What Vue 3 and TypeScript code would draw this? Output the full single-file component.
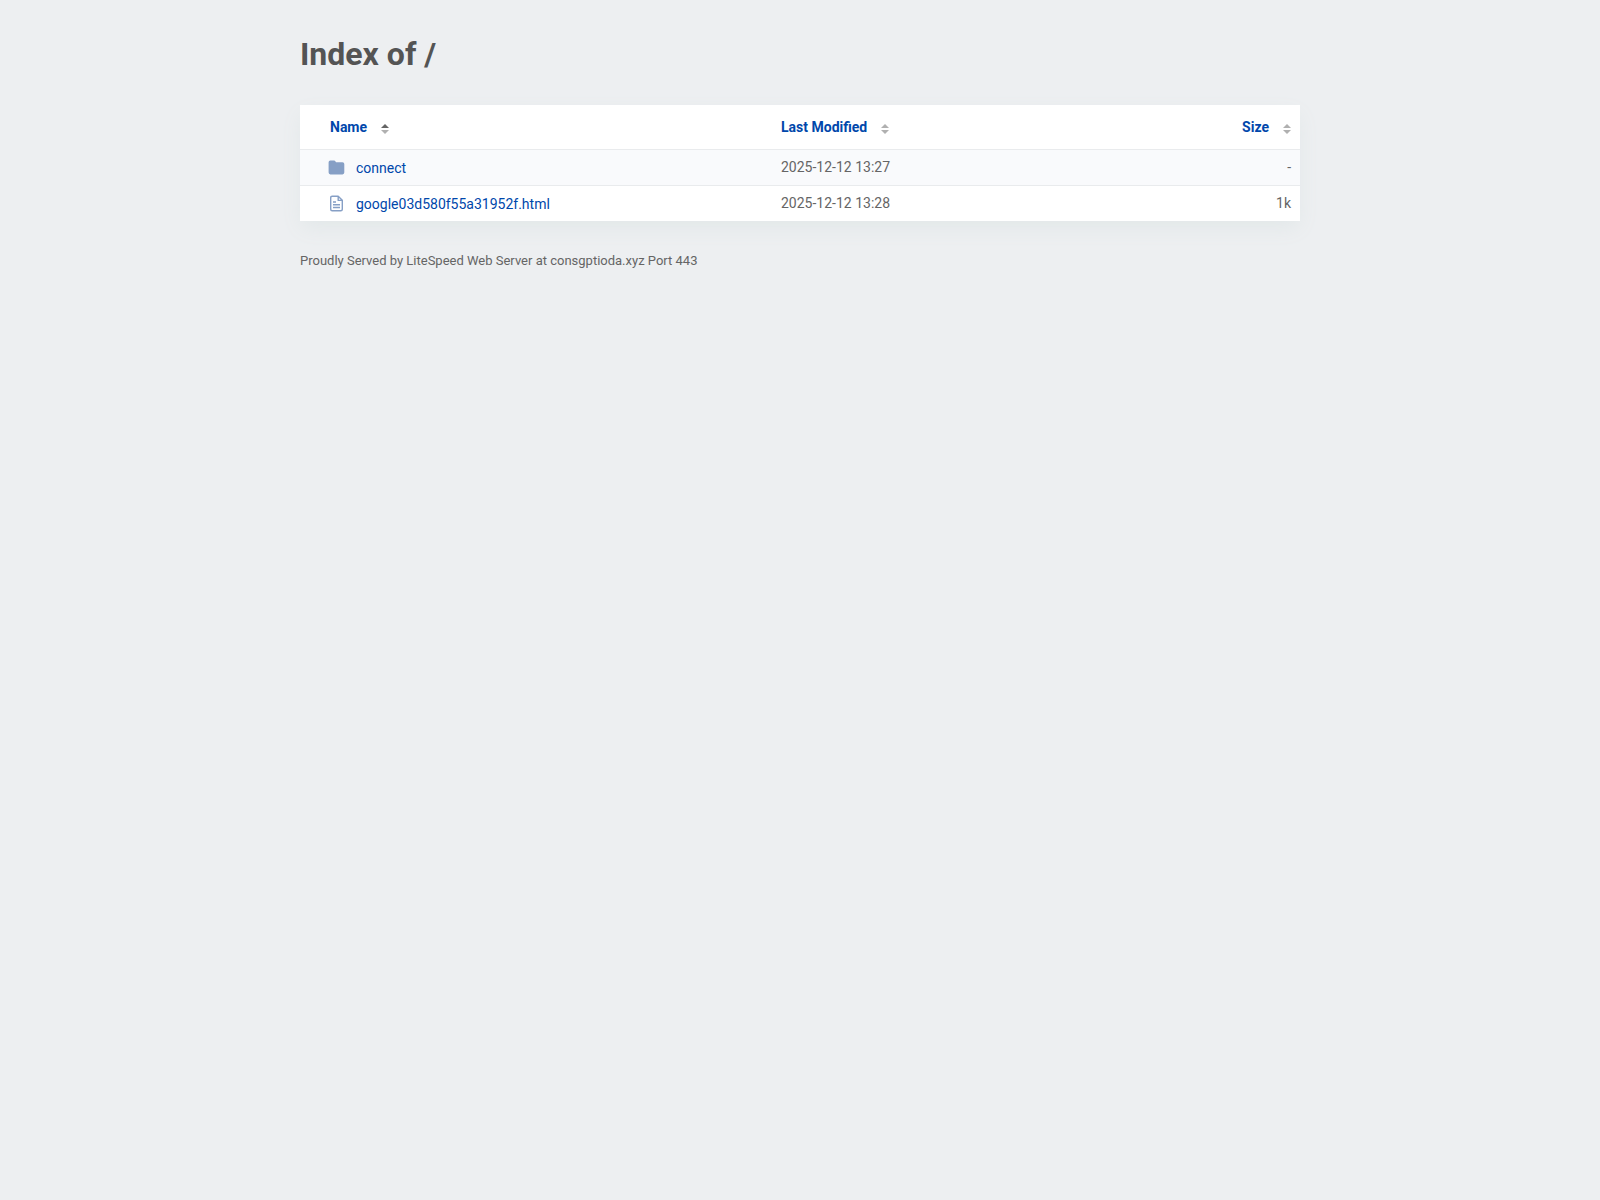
<script setup lang="ts">
interface Column {
  key: string
  label: string
  sorted: boolean
}

interface Entry {
  name: string
  kind: 'folder' | 'file'
  modified: string
  size: string
}

const columns: Column[] = [
  { key: 'name', label: 'Name', sorted: true },
  { key: 'modified', label: 'Last Modified', sorted: false },
  { key: 'size', label: 'Size', sorted: false },
]

const entries: Entry[] = [
  { name: 'connect', kind: 'folder', modified: '2025-12-12 13:27', size: '-' },
  { name: 'google03d580f55a31952f.html', kind: 'file', modified: '2025-12-12 13:28', size: '1k' },
]
</script>

<template>
  <main class="content">
    <h1>Index of /</h1>
    <table>
      <thead>
        <tr>
          <th v-for="c in columns" :key="c.key" :class="c.key" :aria-sort="c.sorted ? 'ascending' : 'none'">
            <button type="button" class="sort">
              {{ c.label }}
              <svg :class="{ sorted: c.sorted }" width="8" height="10" viewBox="0 0 8 10" aria-hidden="true">
                <path class="up" d="M4 0 L8 4 H0 Z" />
                <path d="M0 6 H8 L4 10 Z" />
              </svg>
            </button>
          </th>
        </tr>
      </thead>
      <tbody>
        <tr v-for="e in entries" :key="e.name">
          <td class="name">
            <a href="#">
              <svg v-if="e.kind === 'folder'" width="18" height="18" viewBox="0 0 18 18" aria-hidden="true">
                <path fill="#869fc5" d="M2.4 1.5 H6 Q7 1.5 7.5 2.5 L8 3.2 H14.5 Q16.3 3.2 16.3 5 V13.6 Q16.3 15.4 14.5 15.4 H2.4 Q0.6 15.4 0.6 13.6 V3.3 Q0.6 1.5 2.4 1.5 Z" />
              </svg>
              <svg v-else width="18" height="18" viewBox="0 0 18 18" fill="none" stroke="#869fc5" stroke-width="1.4" stroke-linejoin="round" aria-hidden="true">
                <path d="M4.2 1.2 H10.2 L14.3 5.3 V14.3 Q14.3 15.8 12.8 15.8 H4.2 Q2.7 15.8 2.7 14.3 V2.7 Q2.7 1.2 4.2 1.2 Z M10.2 1.4 V5.4 H14" />
                <path d="M5 7 H8 M5 9.7 H12 M5 12.5 H12" />
              </svg>
              <span>{{ e.name }}</span>
            </a>
          </td>
          <td class="modified">{{ e.modified }}</td>
          <td class="size">{{ e.size }}</td>
        </tr>
      </tbody>
    </table>
    <footer>Proudly Served by LiteSpeed Web Server at consgptioda.xyz Port 443</footer>
  </main>
</template>

<style>
body {
  background: #edeff1;
}
</style>

<style scoped>
.content {
  max-width: 1000px;
  margin: 0 auto;
  padding: 32px 0;
  color: #545454;
  font-family: Roboto, "Liberation Sans", sans-serif;
  font-size: 14px;
  line-height: 20px;
}
h1 {
  margin: 0 0 29px;
  font-size: 32px;
  line-height: 44px;
  font-weight: 700;
}
table {
  width: 100%;
  table-layout: fixed;
  border-collapse: separate;
  border-spacing: 0;
  background: #fff;
  box-shadow: 0 8px 20px -2px #e1e7e8;
}
th,
td {
  padding: 7px 9px 8px;
  text-align: left;
  color: #656565;
}
th {
  padding-top: 12px;
  padding-bottom: 12px;
  border-bottom: 1px solid #e9ebed;
}
tbody tr:nth-child(odd) td {
  background: #f9fafc;
}
tbody tr:not(:last-child) td {
  border-bottom: 1px solid #e9ebed;
}
th.name {
  width: 47.2%;
  box-sizing: border-box;
  padding-left: 30px;
}
td.name {
  padding: 8px 9px 7px 28px;
}
th.size,
td.size {
  text-align: right;
}
td.modified,
td.size {
  vertical-align: top;
}
.sort {
  display: inline-flex;
  align-items: center;
  gap: 14px;
  padding: 0;
  border: 0;
  background: none;
  color: #0047ab;
  font: inherit;
  font-weight: 700;
  line-height: 20px;
  cursor: pointer;
}
.sort svg {
  margin-top: 3px;
  fill: #b0b0b0;
}
.sort .sorted .up {
  fill: #656565;
}
a {
  display: flex;
  align-items: center;
  gap: 10px;
  color: #0047ab;
  text-decoration: none;
}
a:hover {
  text-decoration: underline;
}
footer {
  margin-top: 30px;
  font-size: 13px;
  color: #656565;
}
</style>
